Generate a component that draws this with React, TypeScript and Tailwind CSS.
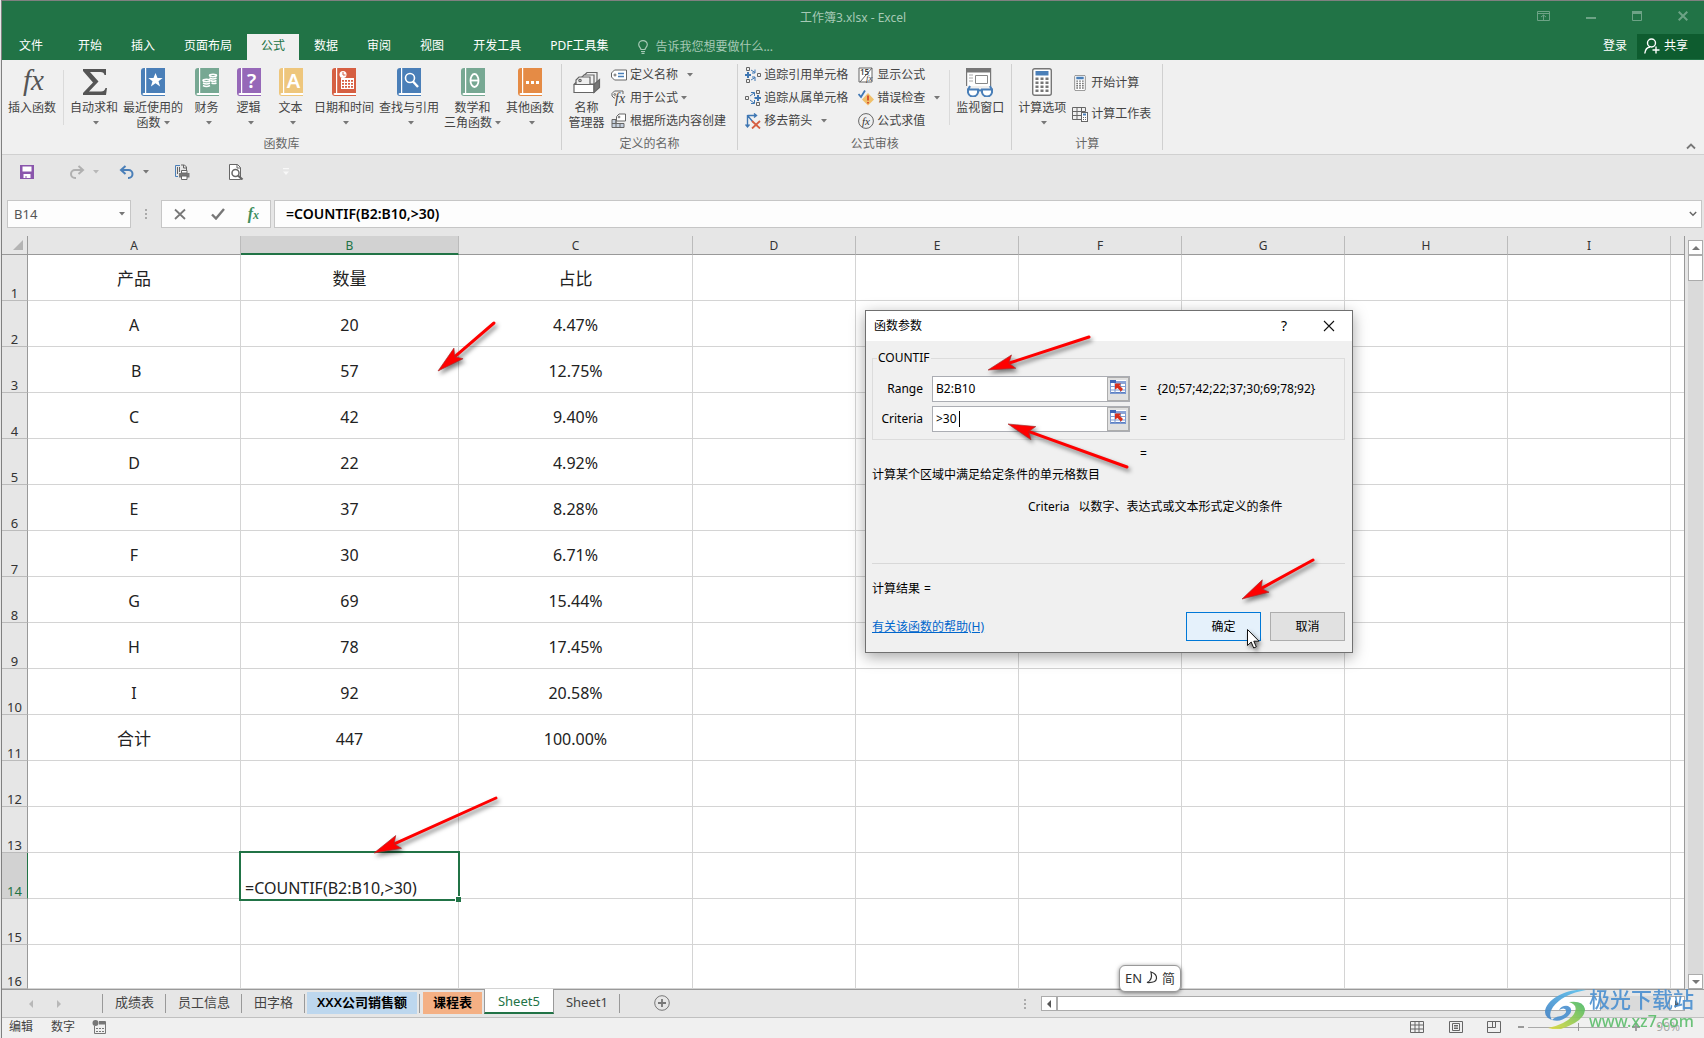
import React from 'react';

type TabItem = { label: string; active?: boolean };

const ribbonTabs: TabItem[] = [
  { label: '开始' },
  { label: '插入' },
  { label: '页面布局' },
  { label: '公式', active: true },
  { label: '数据' },
  { label: '审阅' },
  { label: '视图' },
  { label: '开发工具' },
  { label: 'PDF工具集' },
];

const columns = ['A', 'B', 'C', 'D', 'E', 'F', 'G', 'H', 'I'];

const rows: string[][] = [
  ['产品', '数量', '占比'],
  ['A', '20', '4.47%'],
  [' B', '57', '12.75%'],
  ['C', '42', '9.40%'],
  ['D', '22', '4.92%'],
  ['E', '37', '8.28%'],
  ['F', '30', '6.71%'],
  ['G', '69', '15.44%'],
  ['H', '78', '17.45%'],
  ['I', '92', '20.58%'],
  ['合计', '447', '100.00%'],
  [],
  [],
  [],
  [],
  [],
];

const Caret: React.FC<{ className?: string }> = ({ className = 'text-[#777]' }) => (
  <svg viewBox="0 0 6 4" className={`w-1.5 h-1 shrink-0 ${className}`} fill="currentColor">
    <path d="M0 0h6L3 3.6z" />
  </svg>
);

/* ---------- ribbon icons ---------- */

const Book: React.FC<{ color: string; children: React.ReactNode }> = ({ color, children }) => (
  <svg viewBox="0 0 24 28" className="w-6 h-7">
    <path d="M3 0h21v28H3a3 3 0 0 1-3-3V3a3 3 0 0 1 3-3z" fill={color} />
    <path d="M4 0h1.2v25H4z" fill="#fff" />
    <path d="M3 25h21v2H3a1.5 1 0 0 1 0-2z" fill="#fff" />
    {children}
  </svg>
);

const FxIcon = () => (
  <svg viewBox="0 0 28 28" className="w-7 h-7 overflow-visible">
    <text x="5" y="22" fontSize="29" fontStyle="italic" fontFamily="Liberation Serif, serif" fill="#555">fx</text>
  </svg>
);

const SigmaIcon = () => (
  <svg viewBox="0 0 28 28" className="w-7 h-7">
    <path d="M3 1h23v6h-1.500q-.5-3-4-3H10l8.500 9.500L9 23.500h12q3.500 0 4.500-3.500H27l-1 7H3v-2l10-10.500L3 3z" fill="#555" />
  </svg>
);

const StarBook = () => (
  <Book color="#4a7fb8">
    <path d="M14.500 5l2 5h5.200l-4.200 3.300 1.600 5.200-4.600-3.200-4.600 3.200 1.600-5.200L7.300 10h5.200z" fill="#fff" />
  </Book>
);

const CoinsBook = () => (
  <Book color="#77a893">
    <g fill="none" stroke="#fff" strokeWidth="1.500">
      <ellipse cx="18" cy="7.500" rx="3.500" ry="1.200" />
      <path d="M14.500 10q3.500 2 7 0M15.500 12.500q3 1.500 6 0M16.500 15q2.500 1 5 0" />
      <ellipse cx="11.500" cy="12.500" rx="3.500" ry="1.200" />
      <path d="M8 15q3.500 2 7 0M8 17.500q3.500 2 7 0" />
    </g>
  </Book>
);

const LetterBook: React.FC<{ color: string; letter: string }> = ({ color, letter }) => (
  <Book color={color}>
    <text x="14.500" y="20" textAnchor="middle" fontSize="20" fontWeight="600" fontFamily="Noto Sans, sans-serif" fill="#fff">{letter}</text>
  </Book>
);

const ThetaBook = () => (
  <Book color="#77a893">
    <g fill="none" stroke="#fff" strokeWidth="1.800">
      <ellipse cx="13.500" cy="12.500" rx="4" ry="6.500" />
      <path d="M9.500 12.500h8" />
    </g>
  </Book>
);

const DateBook = () => (
  <Book color="#d65f42">
    <circle cx="11" cy="6.500" r="3.500" fill="#fff" />
    <path d="M11 4v3h2.500" fill="none" stroke="#d65f42" />
    <path d="M9 10h13v11H9z" fill="#fff" />
    <path d="M10 12h2v1.800h-2zM13 12h2v1.800h-2zM16 12h2v1.800h-2zM19 12h2v1.800h-2zM10 15h2v1.800h-2zM13 15h2v1.800h-2zM16 15h2v1.800h-2zM19 15h2v1.800h-2zM10 18h2v1.800h-2zM13 18h2v1.800h-2zM16 18h2v1.800h-2zM19 18h2v1.800h-2z" fill="#d65f42" />
  </Book>
);

const SearchBook = () => (
  <Book color="#4a7fb8">
    <circle cx="13" cy="10" r="4.500" fill="none" stroke="#fff" strokeWidth="1.600" />
    <path d="M16 13.500l5 5.500" stroke="#fff" strokeWidth="2.400" />
  </Book>
);

const DotsBook = () => (
  <Book color="#e58b45">
    <path d="M8 13h3v3H8zM13 13h3v3h-3zM18 13h3v3h-3z" fill="#fff" />
  </Book>
);

const NameManagerIcon = () => (
  <svg viewBox="0 0 28 28" className="w-7 h-7" fill="none" stroke="#666" strokeWidth="1.200">
    <path d="M11 7.500l3-3h10v10l-2 2" fill="#f0f0f0" />
    <path d="M8 10l3-3h10v9h-4" fill="#f0f0f0" />
    <path d="M3 16v-4l3-3h11v7" fill="#f0f0f0" />
    <circle cx="7" cy="12.500" r="1.200" />
    <path d="M1 16.500h20v8H1z" fill="#fff" />
    <path d="M21 16.500l5.500-5v8l-5.500 5z" fill="#777" />
    <path d="M1 16.500l2-2" />
  </svg>
);

const WatchIcon = () => (
  <svg viewBox="0 0 30 30" className="w-[30px] h-[30px]">
    <path d="M1.600 1.600h24v19h-24z" fill="#fff" stroke="#777" strokeWidth="1.200" />
    <path d="M1 1h25v4.500H1z" fill="#777" />
    <path d="M4 8h4M4 11h4M4 14h4" stroke="#aaa" />
    <path d="M10.500 8.500h12v8h-12z" fill="#fff" stroke="#888" />
    <path d="M1 19h28v11H1z" fill="#f0f0f0" />
    <g fill="#fff" stroke="#4a7fb8" strokeWidth="2">
      <path d="M3 22.500h10v3q-1 4-5 4t-5-4zM17 22.500h10v3q-1 4-5 4t-5-4z" />
      <path d="M13 24q2-1.500 4 0M3 23l2-4M27 23l-2-4" fill="none" />
    </g>
  </svg>
);

const CalcIcon: React.FC<{ className: string }> = ({ className }) => (
  <svg viewBox="0 0 20 28" className={className}>
    <rect x=".7" y=".7" width="18.600" height="26.600" rx="2" fill="#fff" stroke="#777" strokeWidth="1.400" />
    <path d="M3.500 3h13v4.500h-13z" fill="#4a7fb8" />
    <path d="M3.500 9.500h3V12h-3zM8.500 9.500h3V12h-3zM13.500 9.500h3V12h-3zM3.500 13.500h3V16h-3zM8.500 13.500h3V16h-3zM13.500 13.500h3V16h-3zM3.500 17.500h3V20h-3zM8.500 17.500h3V20h-3zM13.500 17.500h3V20h-3zM3.500 21.500h3V24h-3zM8.500 21.500h3V24h-3zM13.500 21.500h3V24h-3z" fill="#777" />
  </svg>
);

const Small: React.FC<{ children: React.ReactNode }> = ({ children }) => (
  <svg viewBox="0 0 16 16" className="w-4 h-4 shrink-0" fill="none" stroke="#666">
    {children}
  </svg>
);

const TagIcon = () => (
  <Small>
    <path d="M3.500 3h12v10h-12L.5 10V6z" fill="#fff" />
    <circle cx="4" cy="8" r="1" />
    <path d="M7 6.500h6M7 9.500h6" stroke="#4a7fb8" strokeWidth="1.300" />
  </Small>
);

const UseFormulaIcon = () => (
  <Small>
    <path d="M4 8H3L1 6V3.500L3.500 1H12v3" />
    <circle cx="3.800" cy="4.500" r=".9" />
    <text x="4" y="13" fontSize="14" fontStyle="italic" fontFamily="Liberation Serif, serif" fill="#444" stroke="none">fx</text>
  </Small>
);

const FromSelectionIcon = () => (
  <Small>
    <path d="M1 6.500h4v4h8v4H1z" fill="#c5d0de" />
    <path d="M1 10.500h12M5 6.500v8M9 10.500v4" />
    <path d="M5.500 3.500L8 1h6.500v7H5.500z" fill="#fff" />
    <circle cx="8" cy="4" r=".9" />
  </Small>
);

const TracePrecedentsIcon = () => (
  <Small>
    <path d="M1.500.5h3v3h-3zM1.500 12.500h3v3h-3zM12.500 6.500h3v3h-3z" />
    <path d="M0 8h6M3 5v6" stroke="#3f77b3" strokeWidth="2" />
    <path d="M6 3l4 2.500M10 2.500v3.500H7M6 13l4-2.500M10 14v-4H7" stroke="#3f77b3" />
  </Small>
);

const TraceDependentsIcon = () => (
  <Small>
    <path d="M.5 6.500h3v3h-3zM11.500.5h3v3h-3zM11.500 12.500h3v3h-3z" />
    <path d="M9.500 8h6.500M13 5v6" stroke="#3f77b3" strokeWidth="2" />
    <path d="M5 6l4-3M6 2.500h3.500V6M5 10l4 3M6 13.500h3.500V10" stroke="#3f77b3" />
  </Small>
);

const RemoveArrowsIcon = () => (
  <Small>
    <path d="M2.500 2v12M.5 11.500l2 2.500 2-2.500M2.500 2.500H11M9 .5l2.500 2L9 4.500M2.500 2.500L8 9" stroke="#3f77b3" strokeWidth="1.400" />
    <path d="M7 8l8 7.500M15 8l-8 7.500" stroke="#d65f42" strokeWidth="1.800" />
  </Small>
);

const ShowFormulaIcon = () => (
  <Small>
    <path d="M1 1h13v14H1z" fill="#fff" />
    <path d="M14 1L2 15" />
    <text x="2" y="8" fontSize="8" fontWeight="600" fontFamily="Noto Sans, sans-serif" fill="#444" stroke="none">15</text>
    <text x="8" y="14" fontSize="9" fontStyle="italic" fontFamily="Liberation Serif, serif" fill="#444" stroke="none">fx</text>
  </Small>
);

const ErrorCheckIcon = () => (
  <Small>
    <path d="M10 3l6 6.500-6 6-6-6z" fill="#f0c06a" stroke="none" />
    <path d="M10 5.500v5M10 12v1.600" stroke="#d64a2a" strokeWidth="1.800" />
    <path d="M.5 4l2.500 3 4-6.500" stroke="#3f77b3" strokeWidth="1.800" />
  </Small>
);

const EvaluateIcon = () => (
  <Small>
    <circle cx="8" cy="8" r="7.400" />
    <text x="4" y="11.500" fontSize="11" fontStyle="italic" fontFamily="Liberation Serif, serif" fill="#333" stroke="none">fx</text>
  </Small>
);

const CalcSheetIcon = () => (
  <Small>
    <path d="M.5 1.500h13v4M9 13.500H.5v-12M.5 5.500h13M.5 9.500H9M5 1.500v12M9.500 1.500V6" />
    <rect x="9.500" y="6.500" width="6" height="9" fill="#fff" />
    <path d="M11 8.500h3" stroke="#4a7fb8" strokeWidth="2" />
    <path d="M11 11.500h3M11 13.500h3" strokeDasharray="1 1" />
  </Small>
);

/* ---------- ribbon parts ---------- */

const BigButton: React.FC<{ icon: React.ReactNode; label: string; second?: string; caret?: boolean }> = ({ icon, label, second, caret }) => (
  <button className="min-w-[41px] px-0.5 pt-2 flex flex-col items-center">
    <span className="h-7 mb-1 flex items-center">{icon}</span>
    <span className="leading-[15px] whitespace-nowrap">{label}</span>
    <span className={`h-[15px] leading-[15px] flex items-center gap-[3px] whitespace-nowrap ${second ? '' : 'pl-1'}`}>
      {second && <span>{second}</span>}
      {caret && <Caret />}
    </span>
  </button>
);

const SmallButton: React.FC<{ icon: React.ReactNode; label: string; caret?: boolean; near?: boolean; tall?: boolean }> = ({ icon, label, caret, near, tall }) => (
  <button className={`flex items-center whitespace-nowrap ${tall ? 'h-[31px]' : 'h-[23px]'}`}>
    {icon}
    <span className="ml-[3px]">{label}</span>
    {caret && <span className={near ? 'ml-[3px]' : 'ml-[9px]'}><Caret /></span>}
  </button>
);

const Group: React.FC<{ title: string; className: string; children: React.ReactNode }> = ({ title, className, children }) => (
  <>
    <section className="shrink-0">
      <div className={`h-[75px] flex items-start ${className}`}>{children}</div>
      <h2 className="h-[17px] leading-[17px] text-center text-[#666]">{title}</h2>
    </section>
    <div className="w-px my-1 bg-[#d0d0d0] shrink-0" />
  </>
);

const InnerRule = () => <div className="w-px h-[55px] mt-2.5 bg-[#dadada]" />;

const Ribbon = () => (
  <div className="flex items-stretch h-[95px] bg-[#f0f0f0] border-b border-[#d0d0d0] text-xs text-[#444]">
    <Group title="函数库" className="gap-px pl-1 pr-[5px]">
      <BigButton icon={<FxIcon />} label="插入函数" />
      <div className="ml-1 mr-[3px]"><InnerRule /></div>
      <BigButton icon={<SigmaIcon />} label="自动求和" caret />
      <BigButton icon={<StarBook />} label="最近使用的" second="函数" caret />
      <BigButton icon={<CoinsBook />} label="财务" caret />
      <BigButton icon={<LetterBook color="#9668b8" letter="?" />} label="逻辑" caret />
      <BigButton icon={<LetterBook color="#eec67c" letter="A" />} label="文本" caret />
      <BigButton icon={<DateBook />} label="日期和时间" caret />
      <BigButton icon={<SearchBook />} label="查找与引用" caret />
      <BigButton icon={<ThetaBook />} label="数学和" second="三角函数" caret />
      <BigButton icon={<DotsBook />} label="其他函数" caret />
    </Group>
    <Group title="定义的名称" className="pl-1 pr-[11px]">
      <BigButton icon={<NameManagerIcon />} label="名称" second="管理器" />
      <div className="ml-1 pt-[3px] flex flex-col items-start">
        <SmallButton icon={<TagIcon />} label="定义名称" caret />
        <SmallButton icon={<UseFormulaIcon />} label="用于公式" caret near />
        <SmallButton icon={<FromSelectionIcon />} label="根据所选内容创建" />
      </div>
    </Group>
    <Group title="公式审核" className="pl-[7px] pr-[5px]">
      <div className="pt-[3px] flex flex-col items-start">
        <SmallButton icon={<TracePrecedentsIcon />} label="追踪引用单元格" />
        <SmallButton icon={<TraceDependentsIcon />} label="追踪从属单元格" />
        <SmallButton icon={<RemoveArrowsIcon />} label="移去箭头" caret />
      </div>
      <div className="ml-2.5 mr-[9px] pt-[3px] flex flex-col items-start">
        <SmallButton icon={<ShowFormulaIcon />} label="显示公式" />
        <SmallButton icon={<ErrorCheckIcon />} label="错误检查" caret />
        <SmallButton icon={<EvaluateIcon />} label="公式求值" />
      </div>
      <div className="mr-1"><InnerRule /></div>
      <BigButton icon={<WatchIcon />} label="监视窗口" />
    </Group>
    <Group title="计算" className="pl-1 pr-[11px]">
      <BigButton icon={<CalcIcon className="w-5 h-7" />} label="计算选项" caret />
      <div className="ml-1 pt-[7px] flex flex-col items-start">
        <SmallButton icon={<CalcIcon className="w-4 h-4" />} label="开始计算" tall />
        <SmallButton icon={<CalcSheetIcon />} label="计算工作表" tall />
      </div>
    </Group>
    <button aria-label="折叠功能区" className="ml-auto mr-2 mb-1 self-end">
      <svg viewBox="0 0 10 8" className="w-2.5 h-2" fill="none" stroke="#777" strokeWidth="1.800"><path d="M1 6.500l4-4 4 4" /></svg>
    </button>
  </div>
);

const TitleBar = () => (
  <header className="bg-[#217346] text-xs text-white">
    <div className="h-[33px] grid grid-cols-[1fr_auto_1fr] items-center">
      <span />
      <h1 className="text-[#a6c9b5] leading-4">工作簿3.xlsx - Excel</h1>
      <div className="flex justify-end items-center gap-9 pr-4 pb-1 text-[#6da386]">
        <button aria-label="功能区显示选项">
          <svg viewBox="0 0 13 10" className="w-[13px] h-2.5" fill="none" stroke="currentColor"><path d="M.5.5h12v9H.5zM0 2.500h13M6.500 9V4M4 6l2.500-2L9 6" /></svg>
        </button>
        <button aria-label="最小化">
          <svg viewBox="0 0 10 10" className="w-2.5 h-2.5"><path d="M0 6h10v2H0z" fill="currentColor" /></svg>
        </button>
        <button aria-label="最大化">
          <svg viewBox="0 0 10 10" className="w-2.5 h-2.5" fill="none" stroke="currentColor"><path d="M.5.5h9v9h-9z" /><path d="M0 1.500h10" strokeWidth="3" /></svg>
        </button>
        <button aria-label="关闭">
          <svg viewBox="0 0 10 10" className="w-2.5 h-2.5" stroke="currentColor" strokeWidth="2"><path d="M.7.7l8.600 8.600M9.300.7L.7 9.300" /></svg>
        </button>
      </div>
    </div>
    <div className="h-[26px] flex items-stretch pl-[3px]">
      <button className="px-3.5 mr-[7px] pb-0.5">文件</button>
      <nav className="flex gap-px">
        {ribbonTabs.map(tab => (
          <button
            key={tab.label}
            className={`px-3.5 pb-0.5 whitespace-nowrap ${tab.active ? 'bg-[#f0f0f0] text-[#217346]' : 'text-white'}`}
          >
            {tab.label}
          </button>
        ))}
      </nav>
      <label className="flex items-center gap-[7px] ml-4 text-[#a6c9b5]">
        <svg viewBox="0 0 10 14" className="w-2.5 h-3.5" fill="none" stroke="currentColor" strokeWidth="1.200">
          <path d="M3 9.500C3 8 .7 7 .7 4.600a4.300 4 0 0 1 8.600 0C9.300 7 7 8 7 9.500zM3 11.500h4M3.500 13.300h3" />
        </svg>
        <input className="w-40 bg-transparent outline-none placeholder:text-[#a6c9b5]" placeholder="告诉我您想要做什么..." />
      </label>
      <button className="ml-auto px-2.5 pb-0.5">登录</button>
      <button className="mb-px w-[67px] pl-[7px] pb-0.5 flex items-center gap-1 bg-[#0e5c2f]">
        <svg viewBox="0 0 16 16" className="w-4 h-4" fill="none" stroke="#fff" strokeWidth="1.400">
          <circle cx="7.500" cy="5" r="4" />
          <path d="M.8 15.500Q1.500 9.500 6 9M8.500 12h7M12 8.500v7" />
        </svg>
        共享
      </button>
    </div>
  </header>
);

const QuickAccess = () => (
  <div className="h-[37px] pl-[18px] pb-1 flex items-center text-[#666]">
    <button aria-label="保存">
      <svg viewBox="0 0 14 14" className="w-3.5 h-3.5"><path d="M0 0h14v14H0z" fill="#8a56ac" /><path d="M2.500 1.500h9v5h-9zM3.500 9h7v4h-4v-2h-1v2h-2z" fill="#fff" /></svg>
    </button>
    <button aria-label="恢复" className="ml-[35px] flex items-center gap-2">
      <svg viewBox="0 0 16 14" className="w-4 h-3.5" fill="none" stroke="#b0b0b0" strokeWidth="2"><path d="M9.500 1L14 5l-4.500 4M14 5H6a4 4 0 0 0 0 8h1" /></svg>
      <Caret className="text-[#b8b8b8]" />
    </button>
    <button aria-label="撤消" className="ml-5 flex items-center gap-2">
      <svg viewBox="0 0 16 14" className="w-4 h-3.5" fill="none" stroke="#4a7fb8" strokeWidth="2"><path d="M6.500 1L2 5l4.500 4M2 5h7.500a4 4 0 0 1 0 8H9" /></svg>
      <Caret />
    </button>
    <button aria-label="快速打印" className="ml-[25px]">
      <svg viewBox="0 0 16 16" className="w-4 h-4" fill="none" stroke="#666">
        <path d="M6 1.500H1.500v11H4" stroke="#4a7fb8" />
        <path d="M3.500 3v7M7 1h3.500l2 2v4M9.500 1v3h3M5.500 3v5" />
        <path d="M5 9h10.500v4.500H5z" fill="#777" stroke="none" />
        <path d="M7.500 6.500h5.500V9H7.500zM7.500 12h5.500v3.500H7.500z" fill="#fff" />
      </svg>
    </button>
    <button aria-label="打印预览" className="ml-[38px]">
      <svg viewBox="0 0 16 16" className="w-4 h-4" fill="none" stroke="#666">
        <path d="M1.500.5h8l3 3v12h-11z" fill="#fff" /><path d="M9 .5V4h3.500" /><circle cx="7.500" cy="9" r="3.500" strokeWidth="1.500" /><path d="M10 11.500l4.500 4" strokeWidth="2.200" />
      </svg>
    </button>
    <button aria-label="自定义快速访问工具栏" className="ml-[38px]">
      <svg viewBox="0 0 8 8" className="w-2 h-2" fill="#f8f8f8"><path d="M1 0h6v1.200H1zM1 3.500h6L4 7z" /></svg>
    </button>
  </div>
);

const FormulaBar = () => (
  <div className="h-7 my-2 pl-[5px] pr-0.5 flex items-stretch text-sm leading-5">
    <div className="w-[124px] flex items-center bg-[#fdfdfd] border border-[#c6c6c6] pr-[5px] pb-px">
      <input aria-label="名称框" defaultValue="B14" className="w-0 flex-1 pl-1.5 text-[13px] text-[#555] bg-transparent outline-none" />
      <Caret />
    </div>
    <div className="w-[30px] flex flex-col items-center justify-center gap-0.5">
      <i className="w-0.5 h-0.5 bg-[#aaa]" />
      <i className="w-0.5 h-0.5 bg-[#aaa]" />
      <i className="w-0.5 h-0.5 bg-[#aaa]" />
    </div>
    <div className="w-[110px] flex items-center justify-between pl-3 pr-[11px] bg-[#fdfdfd] border border-[#c6c6c6]">
      <button aria-label="取消">
        <svg viewBox="0 0 12 12" className="w-3 h-3" stroke="#777" strokeWidth="1.800"><path d="M1 1.500l10 9.500M11 1.500L1 11" /></svg>
      </button>
      <button aria-label="输入" className="ml-0.5">
        <svg viewBox="0 0 14 12" className="w-3.5 h-3" fill="none" stroke="#777" strokeWidth="2.400"><path d="M1 6.500L5 10.500 13 1" /></svg>
      </button>
      <button aria-label="插入函数" className="font-['Liberation_Serif',serif] italic font-bold text-base text-[#3f8f5f]">
        f<span className="text-xs">x</span>
      </button>
    </div>
    <div className="ml-[3px] flex-1 flex items-center bg-[#fdfdfd] border border-[#c6c6c6] pr-1 pb-px">
      <input aria-label="编辑栏" defaultValue="=COUNTIF(B2:B10,>30)" className="w-0 flex-1 pl-[11px] text-sm font-semibold text-black bg-transparent outline-none" />
      <svg viewBox="0 0 10 8" className="w-2 h-2" fill="none" stroke="#666" strokeWidth="1.800"><path d="M1 1.500l4 4 4-4" /></svg>
    </div>
  </div>
);

const Sheet = () => (
  <div className="flex-1 min-w-0 overflow-hidden border-r border-[#999] bg-white">
    <table className="w-full table-fixed border-separate border-spacing-0">
      <colgroup>
        <col className="w-[26px]" />
        <col className="w-[213px]" />
        <col className="w-[218px]" />
        <col className="w-[234px]" />
        <col className="w-[163px]" />
        <col className="w-[163px]" />
        <col className="w-[163px]" />
        <col className="w-[163px]" />
        <col className="w-[163px]" />
        <col className="w-[163px]" />
        <col />
      </colgroup>
      <thead>
        <tr className="h-[19px] text-xs leading-[14px] text-[#333]">
          <th className="p-0 bg-[#e6e6e6] border-r border-b border-[#999]">
            <svg viewBox="0 0 10 10" className="w-2.5 h-2.5 ml-auto mr-1"><path d="M10 0v10H0z" fill="#b4b4b4" /></svg>
          </th>
          {columns.map(col => (
            <th
              key={col}
              className={`p-0 align-bottom border-r border-r-[#bbb] font-normal ${
                col === 'B' ? 'bg-[#d2d2d2] text-[#217346] border-b-2 border-b-[#217346]' : 'pb-px bg-[#e6e6e6] border-b border-b-[#999]'
              }`}
            >
              {col}
            </th>
          ))}
          <th className="p-0 bg-[#e6e6e6] border-b border-[#999]" />
        </tr>
      </thead>
      <tbody>
        {rows.map((cells, r) => {
          const selected = r === 13;
          return (
            <tr key={r} className={r === rows.length - 1 ? 'h-11' : 'h-[46px]'}>
              <th
                className={`p-0 align-bottom text-[13px] leading-[14px] font-normal border-b border-r ${
                  selected ? 'bg-[#d2d2d2] text-[#217346] border-b-[#bbb] border-r-[#217346]' : 'bg-[#e6e6e6] text-[#333] border-b-[#bbb] border-r-[#999]'
                }`}
              >
                {r + 1}
              </th>
              {columns.map((col, c) =>
                selected && col === 'B' ? (
                  <td key={col} className="relative p-0 align-bottom">
                    <input aria-label="B14" defaultValue="=COUNTIF(B2:B10,>30)" className="block w-full h-5 mb-px pl-1 bg-transparent text-base leading-5 text-[#222] outline-none" />
                    <span className="absolute -inset-y-0.5 -left-0.5 -right-px border-2 border-[#217346] pointer-events-none" />
                    <span className="absolute -bottom-[3px] -right-0.5 w-1.5 h-1.5 bg-[#217346] border-t border-l border-white" />
                  </td>
                ) : (
                  <td
                    key={col}
                    className={`p-0 pt-0.5 text-center text-[#222] whitespace-pre border-r border-b border-[#d4d4d4] ${(cells[c] || '').match(/[一-龥]/) ? 'text-[17px] leading-6' : 'text-base leading-6'}`}
                  >
                    {cells[c]}
                  </td>
                )
              )}
              <td className="p-0 border-b border-[#d4d4d4]" />
            </tr>
          );
        })}
      </tbody>
    </table>
  </div>
);

const VScroll = () => (
  <div className="w-[15px] ml-[3px] mr-px pt-1 flex flex-col">
    <div className="flex-1 flex flex-col bg-[#dadada]">
      <button aria-label="向上" className="h-[15px] flex items-center justify-center bg-white border border-[#ababab]">
        <svg viewBox="0 0 8 4" className="w-2 h-1" fill="#777"><path d="M0 4l4-4 4 4z" /></svg>
      </button>
      <div className="h-[26px] bg-white border border-[#ababab]" />
      <button aria-label="向下" className="mt-auto h-[15px] flex items-center justify-center bg-white border border-[#ababab]">
        <svg viewBox="0 0 8 4" className="w-2 h-1" fill="#777"><path d="M0 0h8L4 4z" /></svg>
      </button>
    </div>
  </div>
);

const SheetTab: React.FC<{ label: string }> = ({ label }) => (
  <button className="h-[19px] mt-1 pb-1 pl-3 pr-[11px] leading-[14px] border-r border-[#999] text-[#444] whitespace-nowrap">{label}</button>
);

const SheetTabs = () => (
  <div className="h-7 flex items-start border-t border-[#999] bg-[#e6e6e6] text-[13px]">
    <div className="w-[101px] h-[19px] mt-1 pl-[27px] flex items-center gap-6 border-r border-[#999]">
      <svg viewBox="0 0 4 8" className="w-1 h-2" fill="#b8b8b8"><path d="M4 0v8L0 4z" /></svg>
      <svg viewBox="0 0 4 8" className="w-1 h-2" fill="#b8b8b8"><path d="M0 0v8l4-4z" /></svg>
    </div>
    <SheetTab label="成绩表" />
    <SheetTab label="员工信息" />
    <SheetTab label="田字格" />
    <button className="h-[22px] mt-0.5 ml-0.5 px-2.5 pb-[3px] leading-[18px] bg-[#bdd7ee] font-semibold text-black whitespace-nowrap">XXX公司销售额</button>
    <span className="w-px h-[19px] mt-1 ml-0.5 mr-[3px] bg-[#999]" />
    <button className="h-[22px] mt-0.5 mr-0.5 px-2.5 pb-[3px] leading-[18px] bg-[#f4b084] font-semibold text-black whitespace-nowrap">课程表</button>
    <button className="h-[25px] -mt-px px-[13px] leading-[22px] bg-white border-x border-[#999] border-b-2 border-b-[#217346] text-[#217346]">Sheet5</button>
    <SheetTab label="Sheet1" />
    <button aria-label="新工作表" className="ml-[34px] mt-[5px]">
      <svg viewBox="0 0 16 16" className="w-4 h-4" fill="none" stroke="#777"><circle cx="8" cy="8" r="7.300" /><path d="M8 4v8M4 8h8" strokeWidth="1.800" /></svg>
    </button>
    <div className="ml-auto mt-1.5 mr-[19px] flex items-center">
      <div className="mr-[15px] flex flex-col gap-0.5">
        <i className="w-0.5 h-0.5 bg-[#aaa]" />
        <i className="w-0.5 h-0.5 bg-[#aaa]" />
        <i className="w-0.5 h-0.5 bg-[#aaa]" />
      </div>
      <div className="w-[644px] h-[15px] flex bg-[#dadada]">
        <button aria-label="向左" className="w-4 flex items-center justify-center bg-white border border-[#ababab]">
          <svg viewBox="0 0 4 8" className="w-1 h-2" fill="#555"><path d="M4 0v8L0 4z" /></svg>
        </button>
        <div className="w-[544px] bg-white border border-[#ababab]" />
        <button aria-label="向右" className="ml-auto w-4 flex items-center justify-center bg-white border border-[#ababab]">
          <svg viewBox="0 0 4 8" className="w-1 h-2" fill="#555"><path d="M0 0v8l4-4z" /></svg>
        </button>
      </div>
    </div>
  </div>
);

const StatusBar = () => (
  <footer className="h-[21px] pl-[7px] pr-6 pb-0.5 flex items-center border-t border-[#c0c0c0] bg-[#f0f0f0] text-xs leading-4 text-[#444]">
    <span>编辑</span>
    <span className="ml-[18px]">数字</span>
    <svg viewBox="0 0 14 14" className="w-3.5 h-3.5 ml-[17px]" fill="none" stroke="#777">
      <path d="M2.500 6v7.500h11v-12H7" /><path d="M7 3h6" strokeWidth="3" /><circle cx="3.500" cy="3" r="3" fill="#777" stroke="none" />
      <path d="M4 8.500h8M4 11.500h8" strokeDasharray="2 1" />
    </svg>
    <div className="ml-auto flex items-center text-[#666]">
      <button aria-label="普通">
        <svg viewBox="0 0 14 12" className="w-3.5 h-3" fill="none" stroke="currentColor"><path d="M.5.5h13v11H.5zM5 0v12M9 0v12M0 4h14M0 8h14" /></svg>
      </button>
      <button aria-label="页面布局" className="ml-[25px]">
        <svg viewBox="0 0 14 12" className="w-3.5 h-3" fill="none" stroke="currentColor"><path d="M.5.5h13v11H.5zM3.500 2.500h7v7h-7zM5 4.500h4M5 6h4M5 7.500h4" /></svg>
      </button>
      <button aria-label="分页预览" className="ml-6">
        <svg viewBox="0 0 14 12" className="w-3.5 h-3" fill="none" stroke="currentColor"><path d="M.5.500V11.500h13V.5zM5.500.5v6M.5 6.500h8v-6" /></svg>
      </button>
      <button aria-label="缩小" className="ml-[17px] w-1.5 h-0.5 bg-[#999]" />
      <input
        type="range"
        aria-label="缩放"
        defaultValue={50}
        className="ml-1 w-[100px] h-2 appearance-none bg-[linear-gradient(#aaa,#aaa)] bg-[length:100%_1px] bg-center bg-no-repeat [&::-webkit-slider-thumb]:appearance-none [&::-webkit-slider-thumb]:w-px [&::-webkit-slider-thumb]:h-2 [&::-webkit-slider-thumb]:bg-[#999]"
      />
      <button aria-label="放大" className="ml-1">
        <svg viewBox="0 0 8 8" className="w-2 h-2" stroke="#999" strokeWidth="1.800"><path d="M4 0v8M0 4h8" /></svg>
      </button>
      <span className="ml-4 text-[#aaa]">90%</span>
    </div>
  </footer>
);

const RefIcon = () => (
  <svg viewBox="0 0 16 14" className="w-4 h-3.5">
    <path d="M0 0h16v14H0z" fill="#fff" />
    <path d="M0 0h6v3H0z" fill="#3f66b5" />
    <path d="M6 1h10v3H6z" fill="#8aa4d8" />
    <path d="M0 12h16v2H0z" fill="#5b7fc4" />
    <path d="M.5 3v10.500h15V3M0 6.500h16M0 10h16M5 3v11M10.500 3v11" fill="none" stroke="#7f9bd0" />
    <path d="M5 3.500h6l-1.500 2 3.500 3.500-2 2.500-3.500-3.500L5 9.500z" fill="#d8301c" />
  </svg>
);

const ArgRow: React.FC<{ name: string; value: string; result?: string; focus?: boolean }> = ({ name, value, result, focus }) => (
  <div className="flex items-center h-[26px]">
    <label htmlFor={`arg-${name}`} className="w-[50px] text-right">{name}</label>
    <div className="ml-[9px] w-[198px] h-[26px] flex bg-white border border-[#abadb3]">
      <span className="flex-1 flex items-center pl-[3px]">
        <input id={`arg-${name}`} defaultValue={value} className={`${focus ? 'w-6 border-r border-black' : 'w-full'} h-4 bg-transparent outline-none`} />
      </span>
      <button aria-label={`选择 ${name}`} className="w-[22px] flex items-center justify-center pb-1 bg-[#e1e1e1] border border-[#adadad]">
        <RefIcon />
      </button>
    </div>
    <span className="ml-[10px] w-[17px]">=</span>
    <span>{result}</span>
  </div>
);

const FunctionDialog = () => (
  <div role="dialog" aria-label="函数参数" className="absolute left-[865px] top-[310px] w-[488px] h-[343px] flex flex-col bg-[#f0f0f0] border border-[#707070] shadow-[0_4px_14px_rgba(0,0,0,0.35)] text-xs leading-4 text-black">
    <div className="h-[30px] flex items-center bg-white pl-2 pr-[17px]">
      <h2 className="flex-1">函数参数</h2>
      <button aria-label="帮助" className="mr-9 text-sm">?</button>
      <button aria-label="关闭">
        <svg viewBox="0 0 12 12" className="w-3 h-3" stroke="#111" strokeWidth="1.100"><path d="M1 1l10 10M11 1L1 11" /></svg>
      </button>
    </div>
    <div className="flex-1 flex flex-col pl-1.5 pr-[7px] pb-[11px]">
      <fieldset className="mt-[9px] h-[90px] border border-[#dcdcdc] pt-[10px]">
        <legend className="ml-1 px-px leading-4">COUNTIF</legend>
        <div className="flex flex-col gap-1">
          <ArgRow name="Range" value="B2:B10" result="{20;57;42;22;37;30;69;78;92}" />
          <ArgRow name="Criteria" value=">30" focus />
        </div>
      </fieldset>
      <div className="mt-[6px] pl-[268px]">=</div>
      <p className="mt-[5px]">计算某个区域中满足给定条件的单元格数目</p>
      <p className="mt-4 pl-[156px] flex gap-[9px]">
        <span>Criteria</span>
        <span>以数字、表达式或文本形式定义的条件</span>
      </p>
      <hr className="mt-12 border-[#d8d8d8]" />
      <p className="mt-[17px] flex gap-1"><span>计算结果</span><span>=</span></p>
      <div className="mt-auto flex items-center gap-[9px]">
        <a href="#help" className="mr-auto text-[#0066cc] underline">有关该函数的帮助(H)</a>
        <button className="w-[75px] h-[29px] border border-[#0078d7] bg-[#e5f1fb]">确定</button>
        <button className="w-[75px] h-[29px] border border-[#adadad] bg-[#e1e1e1]">取消</button>
      </div>
    </div>
  </div>
);

// tail and tip of every annotation arrow
const arrows = [
  { x1: 1089, y1: 337, x2: 988, y2: 370 },
  { x1: 1127, y1: 467, x2: 1008, y2: 424 },
  { x1: 1313, y1: 560, x2: 1242, y2: 599 },
  { x1: 494, y1: 323, x2: 438, y2: 371 },
  { x1: 496, y1: 798, x2: 374, y2: 853 },
];

const Annotations = () => (
  <svg className="absolute inset-0 w-full h-full pointer-events-none drop-shadow-[2px_3px_2px_rgba(0,0,0,0.5)]">
    {arrows.map(a => {
      const len = Math.hypot(a.x2 - a.x1, a.y2 - a.y1);
      const angle = (Math.atan2(a.y2 - a.y1, a.x2 - a.x1) * 180) / Math.PI;
      return (
        <g key={a.x1} transform={`translate(${a.x1} ${a.y1}) rotate(${angle})`}>
          <path d={`M0 0H${len - 18}`} stroke="#fe0000" strokeWidth="3" strokeLinecap="round" />
          <path d={`M${len} 0L${len - 27} -7L${len - 22} 0L${len - 27} 7z`} fill="#fe0000" stroke="#a03030" strokeWidth=".6" />
        </g>
      );
    })}
    <path d="M1247.500 629.500v16l3.700-3.500 2.500 6 2.600-1.200-2.500-5.600h5.200z" fill="#fff" stroke="#111" />
  </svg>
);

const ImeBadge = () => (
  <div className="absolute left-[1119px] top-[965px] w-[62px] h-[27px] pb-0.5 flex items-center justify-center gap-1 rounded-md bg-white border border-[#999] shadow-[0_1px_4px_rgba(0,0,0,0.5)] text-[13px] leading-4 text-[#333]">
    <span>EN</span>
    <svg viewBox="0 0 12 14" className="w-3 h-3.5" fill="none" stroke="#333" strokeWidth="1.200"><path d="M5 1q6 2 5.500 6.500T1 11.500Q7 9 5 1z" /></svg>
    <span>简</span>
  </div>
);

const Watermark = () => (
  <div className="absolute right-2.5 bottom-[7px] flex items-center gap-0.5 opacity-90 pointer-events-none">
    <svg viewBox="0 0 42 40" className="w-[42px] h-10">
      <defs>
        <linearGradient id="wm-blue" x1="0" y1="1" x2="1" y2="0">
          <stop offset="0" stopColor="#3f7fc4" />
          <stop offset="1" stopColor="#5cc4f0" />
        </linearGradient>
        <linearGradient id="wm-green" x1="0" y1="1" x2="1" y2="0">
          <stop offset="0" stopColor="#e3dc3c" />
          <stop offset="1" stopColor="#45b868" />
        </linearGradient>
      </defs>
      <path d="M41 1C22-1 1 10 0 23q0 6 7 8Q3 25 8 18 18 5 41 1z" fill="url(#wm-blue)" />
      <path d="M7 31q9 3 17-5 5-6-1-9-6-1-9 4 5-3 7 0 1 4-5 6-7 1-9 4z" fill="#4a90cf" />
      <path d="M24 13q14-2 16 7 0 12-24 20-6 1-13-1Q22 35 29 25q5-9-5-12z" fill="url(#wm-green)" />
    </svg>
    <div className="flex flex-col items-start font-medium">
      <span className="text-[21px] leading-6 text-[#4a8fd0]">极光下载站</span>
      <span className="text-base leading-5 text-[#5cbd6c]">www.xz7.com</span>
    </div>
  </div>
);

export default function App() {
  return (
    <div className="relative h-screen pl-px bg-[#e8e8e8] overflow-hidden font-['Noto_Sans','Noto_Sans_CJK_SC',sans-serif]">
      <div className="h-full flex flex-col border-t border-l border-[#808080] bg-[#e6e6e6]">
        <TitleBar />
        <Ribbon />
        <QuickAccess />
        <FormulaBar />
        <main className="flex-1 min-h-0 flex items-stretch">
          <Sheet />
          <VScroll />
        </main>
        <SheetTabs />
        <StatusBar />
      </div>
      <FunctionDialog />
      <ImeBadge />
      <Annotations />
      <Watermark />
    </div>
  );
}
